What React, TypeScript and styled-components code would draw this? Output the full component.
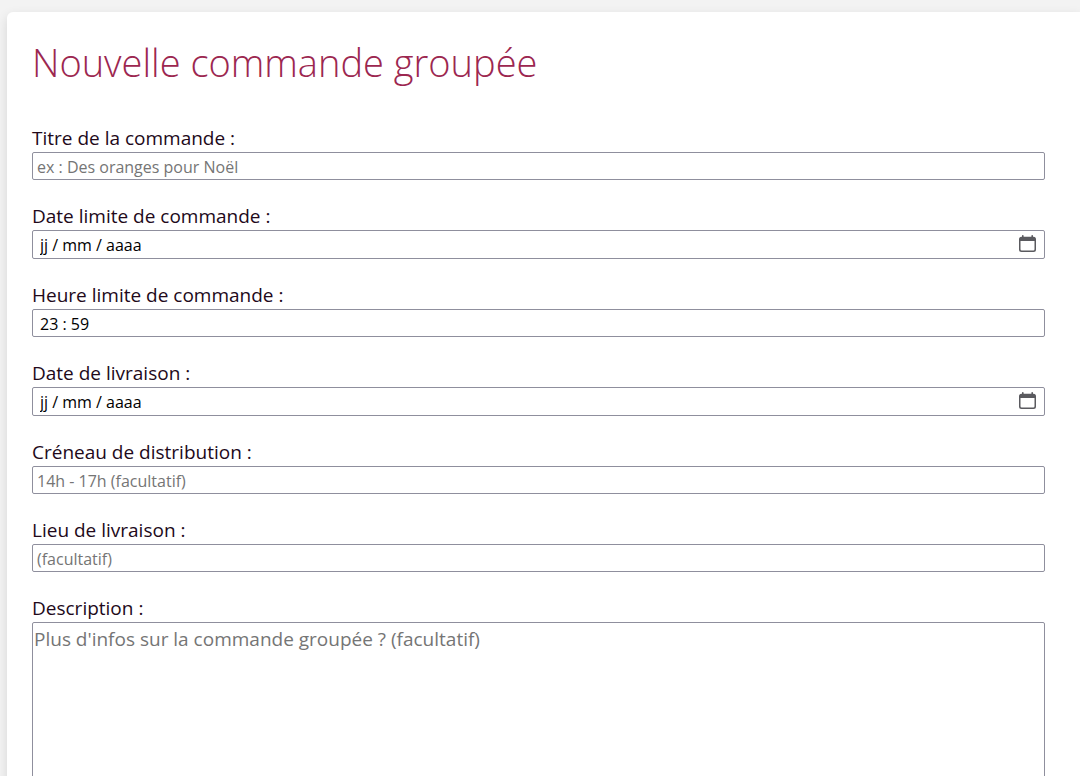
import React from 'react';
import styled, { createGlobalStyle, css } from 'styled-components';

const GlobalStyle = createGlobalStyle`
  *, *::before, *::after { box-sizing: border-box; }
  body {
    margin: 0;
    background: #f3f3f3;
    color: #22091a;
    font-family: "Segoe UI", "Open Sans", "Noto Sans", sans-serif;
    font-size: 19px;
  }
`;

const Page = styled.main`
  padding: 12px 0 12px 7px;
`;

const Card = styled.section`
  padding: 24px 35px 32px 25px;
  background: #fff;
  border-radius: 6px 0 0 6px;
  box-shadow: 0 4px 12px rgba(0, 0, 0, 0.12);
`;

const Title = styled.h1`
  margin: 0 0 36px;
  color: #9c2750;
  font-size: 38px;
  font-weight: 300;
  line-height: 52px;
`;

const Form = styled.form`
  display: flex;
  flex-direction: column;
  gap: 22px;
`;

const Field = styled.div`
  display: flex;
  flex-direction: column;
`;

const Label = styled.label`
  line-height: 28px;
`;

const control = css`
  display: block;
  width: 100%;
  border: 1px solid #8f8f9d;
  border-radius: 2px;
  background: #fff;
  color: #000;
  font-family: inherit;
  outline: none;
`;

const Input = styled.input<{ $picker?: boolean }>`
  ${control}
  height: ${({ $picker }) => ($picker ? 29 : 28)}px;
  padding: 1px ${({ $picker }) => ($picker ? 32 : 4)}px 0 4px;
  font-size: 16px;

  &::placeholder {
    color: #757575;
    opacity: 1;
  }
`;

const SegmentedInput = styled(Input)`
  padding-left: 7px;

  &::placeholder {
    color: #000;
  }
`;

const PickerBox = styled.div`
  position: relative;
`;

const PickerButton = styled.button`
  position: absolute;
  top: 0;
  right: 9px;
  bottom: 0;
  display: flex;
  align-items: center;
  padding: 0 0 2px;
  border: 0;
  background: none;
  color: #5a5a5f;
  cursor: pointer;
`;

const TextArea = styled.textarea`
  ${control}
  height: 220px;
  padding: 2px 1px;
  font-size: 19px;
  line-height: 28px;
  resize: vertical;

  &::placeholder {
    color: #757575;
    opacity: 1;
  }
`;

const CalendarIcon = () => (
  <svg width="17" height="17" viewBox="0 0 17 17" fill="none" aria-hidden="true">
    <path
      fill="currentColor"
      fillRule="evenodd"
      d="M3.800 0a.8.8 0 0 1 .8.8V1.700h7.800V.8a.8.8 0 0 1 1.600 0V1.700h.5A2.500 2.500 0 0 1 17 4.200v10.300a2.500 2.500 0 0 1-2.500 2.500h-12A2.500 2.500 0 0 1 0 14.500V4.200A2.500 2.500 0 0 1 2.500 1.700H3V.8A.8.8 0 0 1 3.800 0zM1.500 6v8.300a1.200 1.200 0 0 0 1.200 1.200h11.600a1.200 1.200 0 0 0 1.200-1.200V6z"
    />
  </svg>
);

type TextFieldProps = { id: string; label: string; placeholder: string };

const TextField = ({ id, label, placeholder }: TextFieldProps) => (
  <Field>
    <Label htmlFor={id}>{label}</Label>
    <Input id={id} name={id} type="text" placeholder={placeholder} />
  </Field>
);

const DateField = ({ id, label }: { id: string; label: string }) => (
  <Field>
    <Label htmlFor={id}>{label}</Label>
    <PickerBox>
      <SegmentedInput id={id} name={id} type="text" inputMode="numeric" placeholder="jj / mm / aaaa" $picker />
      <PickerButton type="button" aria-label="Ouvrir le calendrier">
        <CalendarIcon />
      </PickerButton>
    </PickerBox>
  </Field>
);

const TimeField = ({ id, label, value }: { id: string; label: string; value: string }) => (
  <Field>
    <Label htmlFor={id}>{label}</Label>
    <SegmentedInput id={id} name={id} type="text" inputMode="numeric" defaultValue={value} />
  </Field>
);

export default function App() {
  return (
    <>
      <GlobalStyle />
      <Page>
        <Card>
          <Title>Nouvelle commande groupée</Title>
          <Form>
            <TextField id="titre" label="Titre de la commande :" placeholder="ex : Des oranges pour Noël" />
            <DateField id="date-limite" label="Date limite de commande :" />
            <TimeField id="heure-limite" label="Heure limite de commande :" value="23 : 59" />
            <DateField id="date-livraison" label="Date de livraison :" />
            <TextField id="creneau" label="Créneau de distribution :" placeholder="14h - 17h (facultatif)" />
            <TextField id="lieu" label="Lieu de livraison :" placeholder="(facultatif)" />
            <Field>
              <Label htmlFor="description">Description :</Label>
              <TextArea
                id="description"
                name="description"
                placeholder="Plus d'infos sur la commande groupée ? (facultatif)"
              />
            </Field>
          </Form>
        </Card>
      </Page>
    </>
  );
}
